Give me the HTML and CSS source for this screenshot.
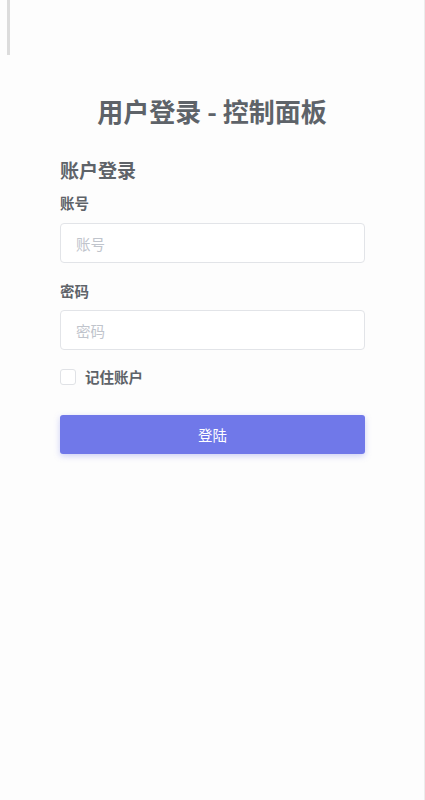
FILE: index.html
```html
<!DOCTYPE html>
<html lang="zh-CN">
<head>
<meta charset="utf-8">
<title>用户登录 - 控制面板</title>
<link rel="stylesheet" href="styles.css">
</head>
<body>
<div class="page">
  <div class="top-bar"></div>
  <h1 class="title">用户登录 - 控制面板</h1>
  <form class="form">
    <h2 class="form-title">账户登录</h2>
    <label class="label" for="acc">账号</label>
    <input class="input" id="acc" type="text" placeholder="账号">
    <label class="label label-second" for="pwd">密码</label>
    <input class="input input-second" id="pwd" type="password" placeholder="密码">
    <label class="remember">
      <span class="checkbox"></span>
      <span class="remember-text">记住账户</span>
    </label>
    <button class="btn" type="button">登陆</button>
  </form>
</div>
</body>
</html>
```
FILE: styles.css
```css
* { box-sizing: border-box; }
html, body { margin: 0; padding: 0; }
body {
  background: #fdfdfd;
  font-family: "Noto Sans CJK SC", "Noto Sans", sans-serif;
  color: #606266;
}
.page {
  min-height: 800px;
  border-right: 1px solid #ececec;
  display: flex;
  flex-direction: column;
}
.top-bar {
  width: 3px;
  height: 55px;
  margin-left: 7px;
  background: #dcdcdc;
}
.title {
  margin: 39px 0 0;
  font-size: 26px;
  line-height: 34px;
  font-weight: 700;
  text-align: center;
  color: #5e6369;
}
.form {
  width: 305px;
  margin: 29px 0 0 60px;
  display: flex;
  flex-direction: column;
}
.form-title {
  margin: 0;
  font-size: 19px;
  line-height: 26px;
  font-weight: 700;
  color: #5e6369;
}
.label {
  margin-top: 10px;
  font-size: 14.5px;
  line-height: 20px;
  font-weight: 700;
  color: #5e6369;
}
.label-second { margin-top: 18px; }
.input {
  margin-top: 10px;
  height: 40px;
  width: 100%;
  border: 1px solid #e2e4e8;
  border-radius: 4px;
  background: #fff;
  padding: 0 15px;
  font-family: inherit;
  font-size: 14.5px;
  color: #606266;
  outline: none;
}
.input-second { margin-top: 9px; }
.input::placeholder { color: #c0c4cc; }
.remember {
  margin-top: 19px;
  display: flex;
  align-items: center;
  gap: 9px;
  height: 16px;
}
.checkbox {
  width: 16px;
  height: 16px;
  border: 1px solid #e0e2e6;
  border-radius: 3px;
  background: #fff;
}
.remember-text {
  font-size: 14.5px;
  line-height: 16px;
  font-weight: 700;
  color: #5e6369;
}
.btn {
  margin-top: 30px;
  height: 39px;
  width: 100%;
  border: none;
  border-radius: 3px;
  background: #7078e9;
  color: #fff;
  font-family: inherit;
  font-size: 14.5px;
  box-shadow: 0 2px 6px rgba(112, 120, 233, 0.35);
}
```
